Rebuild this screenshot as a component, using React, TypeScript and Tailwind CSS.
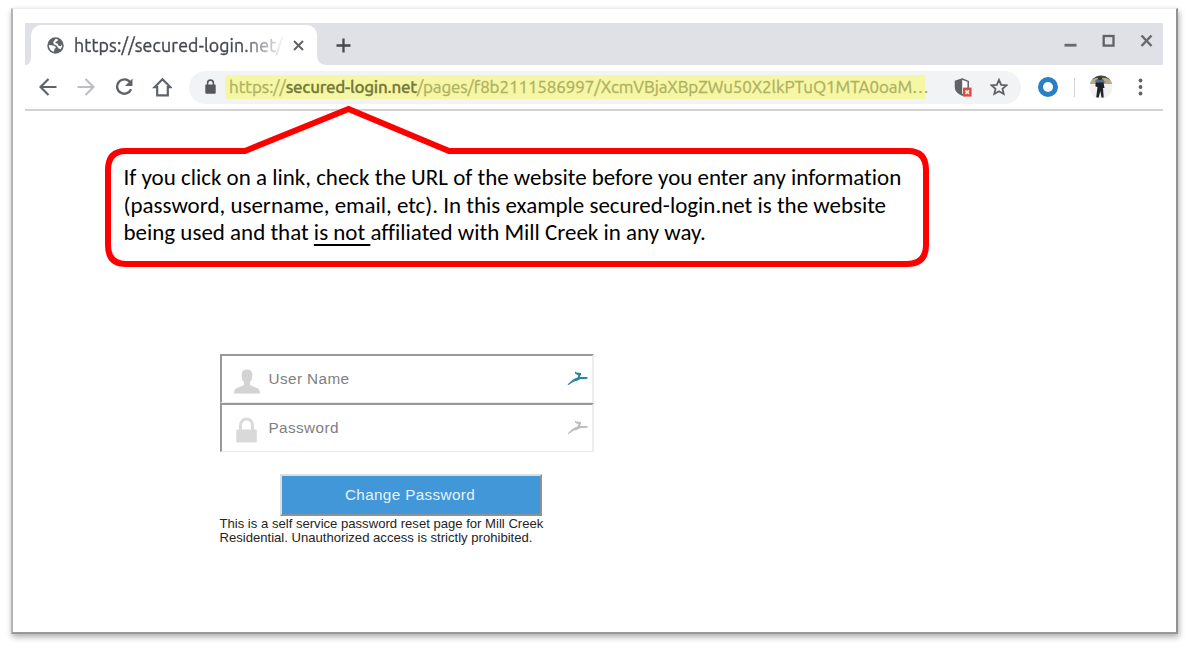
import type { ReactNode } from "react";

function TabStrip() {
  return (
    <div className="flex h-[42px] items-start bg-[#dfe1e7]">
      <svg className="mt-[2px] ml-[1px] block h-[40px] w-[5px]" viewBox="0 0 5 40">
        <path d="M0 40 Q5 39 5 32 V40 Z" fill="#fff" />
      </svg>
      <div className="mt-[2px] flex h-[40px] w-[286px] items-center rounded-t-[10px] bg-white pl-[16px]">
        <svg className="h-[17px] w-[17px]" viewBox="0 0 17 17">
          <circle cx="8.5" cy="8.5" r="8.2" fill="#5f6368" />
          <path d="M1.8 8 L6.5 8.4 Q9 9.2 8.8 11 L7.4 11.8 7 14.8 Q2 13.5 1.8 8Z" fill="#fff" />
          <path d="M8.7 1.8 L11 2.4 10.6 4 8.7 4.8 8.2 6 10.8 6.8 11.5 8.8 13.7 9.3 14.9 7.2 Q15.5 10 13.7 12.3 L11.3 11.2 9.8 8.7 7 7.2 6.1 5.2 Z" fill="#fff" />
        </svg>
        <div className="ml-[10px] w-[209px] font-['Ubuntu','Noto_Sans',sans-serif] text-[17.8px] tracking-[0.14px] whitespace-nowrap text-[#45494e] [-webkit-text-stroke:0.35px_#45494e] [mask-image:linear-gradient(to_right,black_80%,transparent_101%)]">
          https://secured-login.net/
        </div>
        <svg className="ml-[10px] h-[11px] w-[11px]" viewBox="0 0 11 11">
          <path d="M1 1 L10 10 M10 1 L1 10" stroke="#5f6368" strokeWidth="2" />
        </svg>
      </div>
      <svg className="h-[42px] w-[9px]" viewBox="0 0 9 42">
        <path d="M0 31 Q0 42 9 42 H0Z" fill="#fff" />
      </svg>
      <svg className="mt-[15px] ml-[10px] h-[15px] w-[15px]" viewBox="0 0 15 15">
        <path d="M7.5 0.5V14.5M0.5 7.5H14.5" stroke="#45494e" strokeWidth="2.3" />
      </svg>
      <div className="mt-[11px] mr-[10px] ml-auto flex gap-[25px]">
        <svg className="h-[14px] w-[13px]" viewBox="0 0 13 14">
          <path d="M0.5 11.2H12.5" stroke="#666a70" strokeWidth="2.8" />
        </svg>
        <svg className="h-[14px] w-[13px]" viewBox="0 0 13 14">
          <rect x="1.7" y="2" width="9.8" height="9.6" fill="none" stroke="#5f6368" strokeWidth="2.3" />
        </svg>
        <svg className="h-[14px] w-[13px]" viewBox="0 0 13 14">
          <path d="M1.5 1.5L11.5 12M11.5 1.5L1.5 12" stroke="#666a70" strokeWidth="2.5" />
        </svg>
      </div>
    </div>
  );
}

function Toolbar() {
  return (
    <div className="flex h-[46px] items-center border-b-2 border-[#d2d2d3] pl-[14px]">
      <svg className="h-[18px] w-[18px]" viewBox="0 0 18 18">
        <path d="M17.5 9H2M9.5 1L1.5 9L9.5 17" fill="none" stroke="#5f6368" strokeWidth="2.2" />
      </svg>
      <svg className="ml-[20px] h-[18px] w-[18px]" viewBox="0 0 18 18">
        <path d="M0.5 9H16M8.5 1L16.5 9L8.5 17" fill="none" stroke="#bdbfc2" strokeWidth="2.2" />
      </svg>
      <svg className="ml-[20px] h-[18px] w-[19px]" viewBox="0 0 19 18">
        <path d="M15.2 4.4A7.2 7.2 0 1 0 16 11.2" fill="none" stroke="#5f6368" strokeWidth="2.4" />
        <path d="M17.5 0.5V8H10Z" fill="#5f6368" />
      </svg>
      <svg className="ml-[18px] h-[20px] w-[20px]" viewBox="0 0 20 20">
        <path d="M10.5 2.2L2.5 10.2H5.2V18.3H15.8V10.2H18.5Z" fill="none" stroke="#5f6368" strokeWidth="2.2" />
      </svg>
      <div className="ml-[17px] flex h-[33px] w-[832px] shrink-0 items-center rounded-full bg-[#f1f3f5] pl-[16px]">
        <svg className="h-[16px] w-[11px] shrink-0" viewBox="0 0 11 16">
          <rect x="0.3" y="5.5" width="10.4" height="9.3" rx="1" fill="#55595e" />
          <path d="M2.6 6V4a2.9 2.9 0 0 1 5.8 0V6" fill="none" stroke="#55595e" strokeWidth="1.6" />
        </svg>
        <div className="ml-[9px] flex h-[24px] w-[705px] shrink-0 items-center rounded-[3px] bg-[linear-gradient(to_right,#f6f7a4_700px,transparent_700px)] pl-[4px] font-['Ubuntu','Noto_Sans',sans-serif] text-[17px] whitespace-nowrap text-[#afb063] [-webkit-text-stroke:0.3px_currentColor]">
          <span className="tracking-[-0.05px]">https://</span>
          <span className="font-medium tracking-[-0.28px] text-[#77783b]">secured-login.net</span>
          <span className="tracking-[-0.11px]">/pages/f8b2111586997/XcmVBjaXBpZWu50X2lkPTuQ1MTA0oaM…</span>
        </div>
        <svg className="ml-[24px] h-[20px] w-[18px] shrink-0" viewBox="0 0 18 20">
          <path d="M8.2 2L14.2 4.4V10Q14.2 15 8.2 18Q1.5 15 1.5 10V4.4Z" fill="#fff" stroke="#5f6368" strokeWidth="1.5" />
          <path d="M8.2 2V18Q1.5 15 1.5 10V4.4Z" fill="#5f6368" />
          <rect x="9" y="10.6" width="8.6" height="9" fill="#d94f45" />
          <path d="M11.5 13.3L15 16.8M15 13.3L11.5 16.8" stroke="#f9e3e1" strokeWidth="1.7" />
        </svg>
        <svg className="ml-[18px] h-[18px] w-[18px] shrink-0" viewBox="0 0 18 18">
          <path d="M9 1.8L11.2 6.8L16.5 7.3L12.5 10.8L13.7 16L9 13.2L4.3 16L5.5 10.8L1.5 7.3L6.8 6.8Z" fill="none" stroke="#5f6368" strokeWidth="1.8" />
        </svg>
      </div>
      <div className="ml-[17px] h-[20px] w-[20px] rounded-full border-[5px] border-[#287fc4] bg-white" />
      <div className="ml-[16px] h-[19px] w-px bg-[#d0d2d5]" />
      <svg className="ml-[14px] h-[24px] w-[24px]" viewBox="0 0 24 24">
        <defs>
          <clipPath id="avatar"><circle cx="12" cy="12" r="11.5" /></clipPath>
        </defs>
        <g clipPath="url(#avatar)">
          <rect width="24" height="24" fill="#f1f1ef" />
          <rect width="24" height="5" fill="#4b4e4b" />
          <path d="M0 5L7 3H17L24 6V9H0Z" fill="#b9aa87" />
          <path d="M6 6L8 4H14L16 7L14 9H8Z" fill="#526f91" />
          <path d="M6.5 7.5H14.5L15.5 13H14L14.7 22.5H12.5L11.3 16L9.7 22.5H7.2L8.5 12L6.5 11.5Z" fill="#202326" />
          <circle cx="11" cy="3.3" r="2" fill="#343434" />
        </g>
      </svg>
      <svg className="ml-[25px] h-[18px] w-[5px]" viewBox="0 0 5 18">
        <circle cx="2.5" cy="2.500" r="1.9" fill="#5f6368" />
        <circle cx="2.5" cy="9" r="1.9" fill="#5f6368" />
        <circle cx="2.5" cy="15.500" r="1.9" fill="#5f6368" />
      </svg>
    </div>
  );
}

function Callout() {
  return (
    <div className="absolute top-[104px] left-[104px] h-[164px] w-[826px]">
      <svg className="absolute inset-0 h-[164px] w-[826px]" viewBox="0 0 826 164">
        <path
          d="M22 47H141L244.5 5L345 47H804Q822 47 822 66V141Q822 160 803 160H22Q4 160 4 141V66Q4 47 22 47Z"
          fill="#fff"
          stroke="#fe0000"
          strokeWidth="6"
        />
      </svg>
      <div className="relative pt-[60px] pl-[19.5px] font-['Carlito','Calibri','Lato',sans-serif] text-[22.97px] leading-[27.5px] whitespace-nowrap text-black [font-variant-ligatures:none]">
        <div>If you click on a link, check the URL of the website before you enter any information</div>
        <div>(password, username, email, etc). In this example secured-login.net is the website</div>
        <div>
          being used and that <span className="underline decoration-2 underline-offset-[4px]">is not </span>affiliated with Mill Creek in any way.
        </div>
      </div>
    </div>
  );
}

function Swoosh({ className }: { className: string }) {
  return (
    <svg className={className} viewBox="0 0 21 15">
      <path d="M0.5 13.5L6 8.5Q8.5 7 10.5 6.5L11.300 4.500L8 2.5V0.5L9.500 1.500L14 2V3.5L12.8 6H20.5V7.7L13 8.3Q10.5 10.3 7 10.5L1.5 14Z" fill="currentColor" />
    </svg>
  );
}

function Field({ icon, label, swoosh }: { icon: ReactNode; label: string; swoosh: string }) {
  return (
    <div className="flex h-[49px] w-[374px] items-center border-t-[2px] border-r-[2px] border-b-[1px] border-l-[2px] border-t-[#999] border-r-[#ededed] border-b-[#eaeaea] border-l-[#999] pl-[12px]">
      {icon}
      <span className="mt-[1px] ml-[9px] text-[15.3px] tracking-[0.4px] text-[#808080]">{label}</span>
      <Swoosh className={`mr-[4px] mb-[2px] ml-auto h-[15px] w-[21px] ${swoosh}`} />
    </div>
  );
}

function LoginForm() {
  return (
    <div className="mt-[243px] ml-[194.5px] w-[374px] font-['Liberation_Sans',Arial,sans-serif]">
      <Field
        label="User Name"
        swoosh="text-[#2b859d]"
        icon={
          <svg className="mt-[4px] h-[25px] w-[26px]" viewBox="0 0 26 25">
            <path d="M13 0.5C17 0.5 18.5 3 18.3 6.5Q18.5 11 16 13V16L24 19.5Q26 20.5 26 24.5H0Q0 20.5 2 19.5L10 16V13Q7.5 11 7.7 6.5C7.5 3 9 0.5 13 0.5Z" fill="#d3d3d3" />
          </svg>
        }
      />
      <Field
        label="Password"
        swoosh="text-[#bebebe]"
        icon={
          <svg className="mt-[4px] h-[26px] w-[26px]" viewBox="0 0 26 26">
            <path d="M6.5 13V8a6 6 0 0 1 12 0V13" fill="none" stroke="#dadada" strokeWidth="3" />
            <rect x="2.3" y="12.5" width="20.5" height="13" rx="1" fill="#d9d9d9" />
          </svg>
        }
      />
      <button className="mt-[22px] ml-[60px] block h-[42px] w-[262px] border-[2px] border-t-[#dedede] border-r-[#8c9298] border-b-[#8c9298] border-l-[#dedede] bg-[#4197d8] pr-[1px] text-[15.3px] tracking-[0.34px] text-[#e6f2fc]">
        Change Password
      </button>
      <p className="mt-[1px] text-[13.1px] leading-[14px] whitespace-nowrap text-[#242424]">
        This is a self service password reset page for Mill Creek
        <br />
        Residential. Unauthorized access is strictly prohibited.
      </p>
    </div>
  );
}

export default function App() {
  return (
    <main className="relative h-[648px] w-[1189px] overflow-hidden bg-white pt-[8px] pl-[11px]">
      <div className="h-[626px] w-[1167px] border-t border-r-2 border-b-2 border-l-2 border-t-[#ededed] border-r-[#929292] border-b-[#999] border-l-[#b5b5b5] bg-white pt-[14px] pr-[13px] pl-[12px] shadow-[1px_3px_6px_rgba(0,0,0,0.32)]">
        <TabStrip />
        <Toolbar />
        <LoginForm />
      </div>
      <Callout />
    </main>
  );
}
